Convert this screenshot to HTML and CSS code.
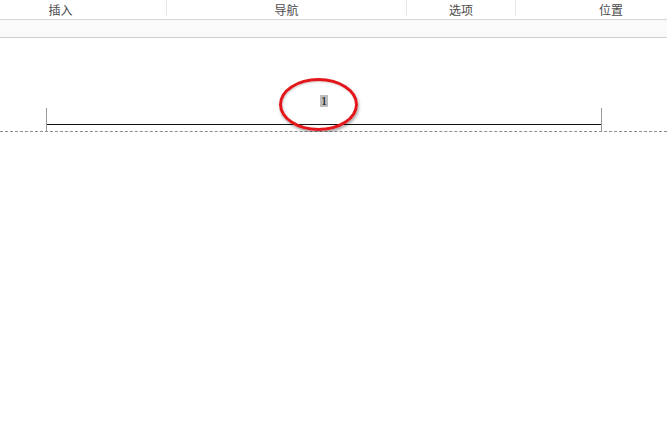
FILE: index.html
```html
<!DOCTYPE html>
<html lang="zh">
<head>
    <meta charset="UTF-8">
    <title>页眉</title>
    <link rel="stylesheet" href="styles.css">
</head>
<body>
    <div class="tabs">
        <div class="tab tab-insert">插入</div>
        <div class="tab tab-nav">导航</div>
        <div class="tab tab-opt">选项</div>
        <div class="tab tab-pos">位置</div>
    </div>
    <div class="ruler"></div>

    <div class="page">
        <div class="header-zone">
            <div class="header-box">
                <span class="pagenum">1</span>
            </div>
        </div>
        <div class="mark"></div>
    </div>
</body>
</html>
```

FILE: styles.css
```css
* {
    margin: 0;
    padding: 0;
    box-sizing: border-box;
}

body {
    background-color: #ffffff;
    font-family: "Noto Sans CJK SC", "Noto Sans", sans-serif;
    overflow: hidden;
    position: relative;
}

.tabs {
    display: flex;
    height: 20px;
    border-bottom: 1px solid #d6d6d6;
}

.tab {
    height: 16px;
    line-height: 19px;
    font-size: 12px;
    color: #4a4a4a;
    text-align: center;
    border-right: 1px solid #e6e6e6;
    flex-shrink: 0;
}

.tab-insert { width: 167px; padding-right: 45px; }
.tab-nav { width: 240px; }
.tab-opt { width: 109px; }
.tab-pos { flex: 1; padding-left: 39px; border-right: none; }

.ruler {
    height: 18px;
    background-color: #fafafa;
    border-bottom: 1px solid #cfcfcf;
}

.header-zone {
    height: 94px;
    border-bottom: 1px dashed #8c8c8c;
    padding-top: 48px;
}

.header-box {
    position: relative;
    margin-left: 46px;
    width: 556px;
    height: 39px;
    border-bottom: 1px solid #111111;
    text-align: center;
}

.header-box::before,
.header-box::after {
    content: "";
    position: absolute;
    bottom: -8px;
    width: 1px;
    height: 24px;
    background-color: #9a9a9a;
}

.header-box::before { left: 0; }
.header-box::after { right: 0; }

.pagenum {
    display: inline-block;
    font-family: "Liberation Serif", serif;
    font-size: 13px;
    line-height: 12px;
    padding: 0 1px;
    color: #111111;
    background-color: #bdbdbd;
}

.mark {
    position: absolute;
    left: 279px;
    top: 78px;
    width: 79px;
    height: 53px;
    border: 3px solid #e2161b;
    border-radius: 50%;
    box-shadow: 1px 2px 3px rgba(0, 0, 0, 0.35), inset 1px 1px 2px rgba(0, 0, 0, 0.2);
}
```
